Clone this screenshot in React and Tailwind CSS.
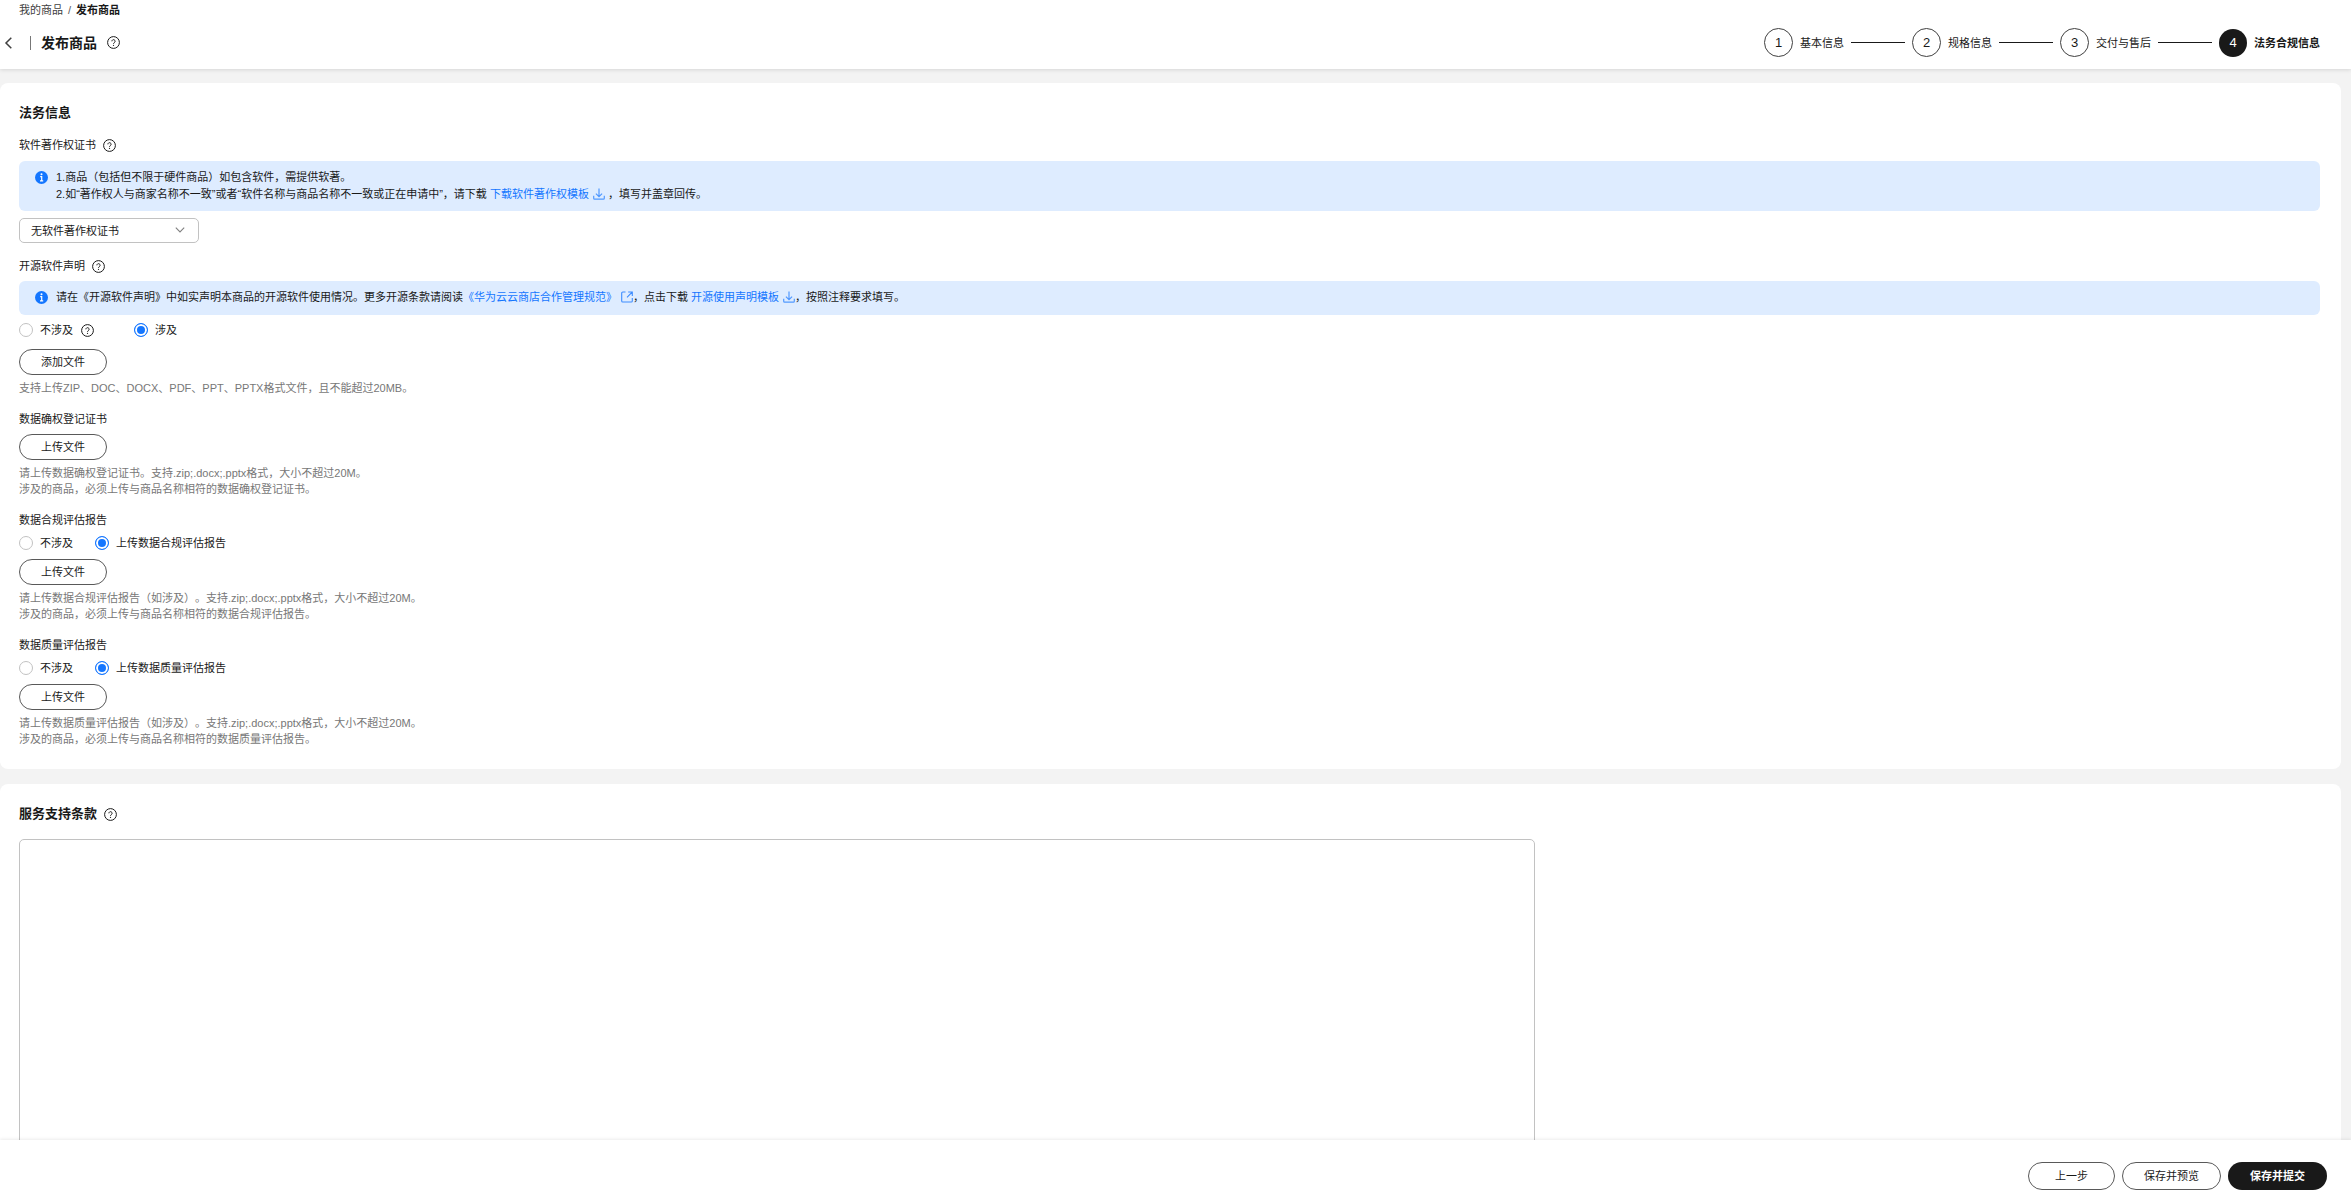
import React from "react";

function HelpIcon() {
  return (
    <svg viewBox="0 0 13 13" className="size-[13px] shrink-0" fill="none" stroke="#191919" aria-hidden="true">
      <circle cx="6.5" cy="6.5" r="5.9" strokeWidth="1" />
      <path d="M4.9 5.3a1.6 1.6 0 1 1 2.5 1.3c-.6.4-.9.7-.9 1.3" strokeWidth="1" />
      <path d="M6.5 8.9v1" strokeWidth="1.1" />
    </svg>
  );
}

function HelpButton({ label }) {
  return (
    <button type="button" aria-label={label} className="flex shrink-0">
      <HelpIcon />
    </button>
  );
}

function InfoIcon() {
  return (
    <svg viewBox="0 0 13 13" className="mt-0.5 size-[13px] shrink-0" aria-hidden="true">
      <circle cx="6.5" cy="6.5" r="6.5" fill="#1476ff" />
      <path d="M5.2 5.6h1.5v4M5 9.8h3.2" stroke="#fff" strokeWidth="1.2" fill="none" />
      <circle cx="6.5" cy="3.3" r="1" fill="#fff" />
    </svg>
  );
}

function DownloadIcon() {
  return (
    <svg viewBox="0 0 12 12" className="ml-1 inline size-3 align-[-2px]" fill="none" stroke="#5199ff" strokeWidth="1.2" aria-hidden="true">
      <path d="M6 .5v8M2.9 5.6 6 8.6l3.1-3M.7 7.8v2.4c0 .6.3.9.9.9h8.8c.6 0 .9-.3.9-.9V7.8" />
    </svg>
  );
}

function ExternalIcon() {
  return (
    <svg viewBox="0 0 12 12" className="ml-1 inline size-3 align-[-2px]" fill="none" stroke="#3c8cff" strokeWidth="1.1" aria-hidden="true">
      <path d="M4.5 1H1.8c-.7 0-1.1.4-1.1 1.1v7.8c0 .7.4 1.1 1.1 1.1h8.4c.7 0 1.1-.4 1.1-1.1V7M7.2 1h4.1v4M11.1 1.2 6 6.3" />
    </svg>
  );
}

function Alert({ children }) {
  return (
    <div className="flex min-h-[34px] gap-2 rounded-md bg-[#deecff] px-4 py-2 leading-[17px]">
      <InfoIcon />
      <div>{children}</div>
    </div>
  );
}

function Link({ children }) {
  return (
    <a href="#" className="text-[#1476ff]">
      {children}
    </a>
  );
}

function Radio({ name, label, checked }) {
  return (
    <label className="flex items-center gap-[7px]">
      <input
        type="radio"
        name={name}
        defaultChecked={checked}
        className="size-3.5 shrink-0 appearance-none rounded-full border border-[#c2c2c2] bg-white checked:border-[#1476ff] checked:bg-[#1476ff] checked:shadow-[inset_0_0_0_2px_white]"
      />
      {label}
    </label>
  );
}

function UploadButton({ children }) {
  return (
    <button type="button" className="h-[26px] w-[88px] rounded-full border border-[#595959] bg-white leading-4">
      {children}
    </button>
  );
}

function Hint({ children }) {
  return <p className="mt-[5px] leading-4 text-[#777777]">{children}</p>;
}

const steps = ["基本信息", "规格信息", "交付与售后", "法务合规信息"];

function Stepper() {
  return (
    <ol className="flex items-center gap-[7px]">
      {steps.map((step, i) => {
        const last = i === steps.length - 1;
        return (
          <li key={step} className="flex items-center gap-[7px]" aria-current={last ? "step" : undefined}>
            <span
              className={
                last
                  ? "flex size-7 items-center justify-center rounded-full bg-[#191919] text-[13px] text-white"
                  : "flex size-[29px] items-center justify-center rounded-full border border-[#404040] text-[13px]"
              }
            >
              {i + 1}
            </span>
            <span className={last ? "font-bold" : ""}>{step}</span>
            {!last && <span className="h-px w-[54px] bg-[#191919]" />}
          </li>
        );
      })}
    </ol>
  );
}

function ReportSection({ title, name }) {
  return (
    <fieldset className="mt-[15px]">
      <legend className="leading-4">{title}</legend>
      <div className="mt-[7px] flex h-4 items-center gap-[22px]">
        <Radio name={name} label="不涉及" />
        <Radio name={name} label={`上传${title}`} checked />
      </div>
      <div className="mt-2">
        <UploadButton>上传文件</UploadButton>
      </div>
      <Hint>
        请上传{title}（如涉及）。支持.zip;.docx;.pptx格式，大小不超过20M。
        <br />
        涉及的商品，必须上传与商品名称相符的{title}。
      </Hint>
    </fieldset>
  );
}

export default function App() {
  return (
    <div
      lang="zh-CN"
      className="flex h-screen flex-col bg-[#f3f3f3] font-['Liberation_Sans','Noto_Sans_CJK_SC',sans-serif] text-[11px] leading-4 text-[#191919] [text-spacing-trim:space-all]"
    >
      <header className="z-10 bg-white pt-0.5 pb-3 shadow-[0_1px_4px_rgba(0,0,0,0.12)]">
        <nav aria-label="面包屑" className="flex gap-[5px] pl-[19px]">
          <a href="#" className="text-[#404040]">我的商品</a>
          <span className="text-[#595959]">/</span>
          <span className="font-bold">发布商品</span>
        </nav>
        <div className="mt-2.5 flex items-center justify-between pr-[31px] pl-1">
          <div className="flex items-center">
            <button type="button" aria-label="返回">
              <svg viewBox="0 0 9 12" className="h-3 w-[9px]" fill="none" stroke="#404040" strokeWidth="1.5" aria-hidden="true">
                <path d="M7.3.8 2 6l5.3 5.2" />
              </svg>
            </button>
            <span className="ml-[17px] h-3.5 w-px bg-[#777777]" />
            <h1 className="mr-2.5 ml-2.5 text-sm font-bold">发布商品</h1>
            <HelpButton label="发布商品说明" />
          </div>
          <Stepper />
        </div>
      </header>

      <main className="min-h-0 flex-1 overflow-y-auto pt-3.5 pr-2.5 [scrollbar-width:none]">
        <section className="rounded-lg bg-white pt-5 pr-[21px] pb-[22px] pl-[19px]">
          <h2 className="text-[13px] leading-5 font-bold">法务信息</h2>

          <div className="mt-3.5 flex items-center gap-[7px]">
            <label htmlFor="copyright">软件著作权证书</label>
            <HelpButton label="软件著作权证书说明" />
          </div>
          <div className="mt-2">
            <Alert>
              <p>1.商品（包括但不限于硬件商品）如包含软件，需提供软著。</p>
              <p>
                2.如“著作权人与商家名称不一致”或者“软件名称与商品名称不一致或正在申请中”，请下载{" "}
                <Link>
                  下载软件著作权模板
                  <DownloadIcon />
                </Link>{" "}
                ，填写并盖章回传。
              </p>
            </Alert>
          </div>
          <div className="relative mt-[7px] w-[180px]">
            <select
              id="copyright"
              className="block h-[25px] w-full appearance-none rounded-[5px] border border-[#c2c2c2] bg-white pl-[11px] leading-4"
            >
              <option>无软件著作权证书</option>
            </select>
            <svg viewBox="0 0 10 6" className="pointer-events-none absolute top-[9px] right-3.5 h-1.5 w-2.5" fill="none" stroke="#808080" aria-hidden="true">
              <path d="M.8.7 5 4.9 9.2.7" strokeWidth="1.1" />
            </svg>
          </div>

          <div className="mt-[15px] flex items-center gap-[7px]">
            <span>开源软件声明</span>
            <HelpButton label="开源软件声明说明" />
          </div>
          <div className="mt-[7px]">
            <Alert>
              <p>
                请在《开源软件声明》中如实声明本商品的开源软件使用情况。更多开源条款请阅读
                <Link>
                  《华为云云商店合作管理规范》
                  <ExternalIcon />
                </Link>
                ，点击下载{" "}
                <Link>
                  开源使用声明模板
                  <DownloadIcon />
                </Link>
                ，按照注释要求填写。
              </p>
            </Alert>
          </div>
          <div className="mt-[7px] flex h-4 items-center">
            <Radio name="opensource" label="不涉及" />
            <span className="mr-10 ml-2 flex">
              <HelpButton label="不涉及说明" />
            </span>
            <Radio name="opensource" label="涉及" checked />
          </div>
          <div className="mt-[11px]">
            <UploadButton>添加文件</UploadButton>
          </div>
          <Hint>支持上传ZIP、DOC、DOCX、PDF、PPT、PPTX格式文件，且不能超过20MB。</Hint>

          <h3 className="mt-[15px]">数据确权登记证书</h3>
          <div className="mt-[7px]">
            <UploadButton>上传文件</UploadButton>
          </div>
          <Hint>
            请上传数据确权登记证书。支持.zip;.docx;.pptx格式，大小不超过20M。
            <br />
            涉及的商品，必须上传与商品名称相符的数据确权登记证书。
          </Hint>

          <ReportSection title="数据合规评估报告" name="compliance" />
          <ReportSection title="数据质量评估报告" name="quality" />
        </section>

        <section className="mt-[15px] rounded-lg bg-white pt-5 pr-[21px] pb-5 pl-[19px]">
          <div className="flex items-center gap-[7px]">
            <h2 className="text-[13px] leading-5 font-bold">
              <label htmlFor="terms">服务支持条款</label>
            </h2>
            <HelpButton label="服务支持条款说明" />
          </div>
          <textarea
            id="terms"
            className="mt-[15px] block h-[480px] w-[1516px] max-w-full resize-none rounded-[5px] border border-[#c2c2c2] bg-white p-2"
          />
        </section>
      </main>

      <footer className="z-10 flex justify-end gap-[7px] bg-white pt-[22px] pr-6 pb-3.5 shadow-[0_-1px_3px_rgba(0,0,0,0.08)]">
        <button type="button" className="h-7 rounded-full border border-[#595959] px-[26px]">上一步</button>
        <button type="button" className="h-7 rounded-full border border-[#595959] px-[21px]">保存并预览</button>
        <button type="button" className="h-7 rounded-full bg-[#191919] px-[22px] font-bold text-white">保存并提交</button>
      </footer>
    </div>
  );
}
